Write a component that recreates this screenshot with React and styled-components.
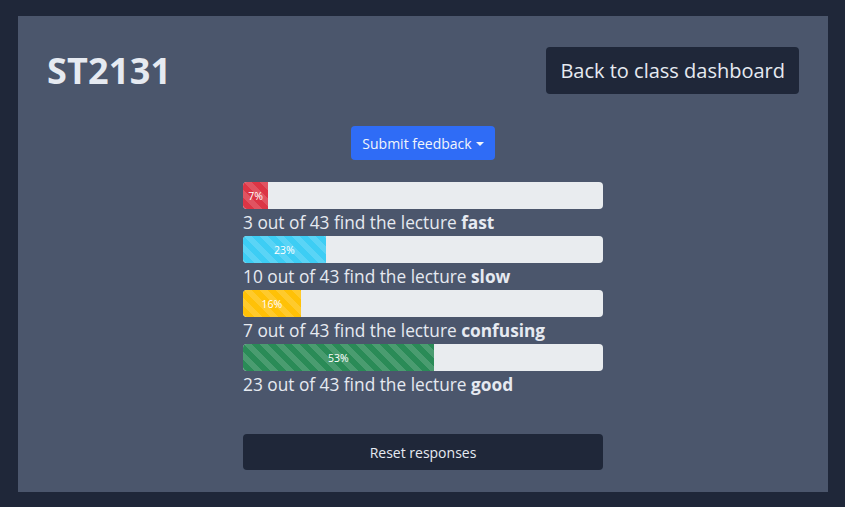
import styled, { createGlobalStyle } from 'styled-components';

const GlobalStyle = createGlobalStyle`
  html, body {
    margin: 0;
    padding: 0;
    background-color: #1f2739;
    font-family: "Open Sans", "Noto Sans", sans-serif;
  }
`;

const Page = styled.div`
  padding: 16px 17px 15px 18px;
  box-sizing: border-box;
  height: 507px;
`;

const Panel = styled.div`
  height: 476px;
  background-color: #4b566c;
  padding: 30px 29px 0 29px;
  box-sizing: border-box;
`;

const Header = styled.div`
  display: flex;
  justify-content: space-between;
  align-items: center;
`;

const Title = styled.h1`
  margin: 0;
  font-size: 36px;
  font-weight: 700;
  color: #e6eaf1;
  letter-spacing: 0.2px;
`;

const DarkButton = styled.button`
  background-color: #1f2739;
  color: #e6eaf1;
  border: none;
  border-radius: 4px;
  font-family: inherit;
  font-size: ${(p) => (p.large ? '20px' : '14px')};
  height: ${(p) => (p.large ? '47px' : '36px')};
  padding: ${(p) => (p.large ? '0 14px 0 14px' : '0')};
  width: ${(p) => (p.large ? 'auto' : '100%')};
  cursor: pointer;
`;

const Content = styled.div`
  width: 360px;
  margin: 31px auto 0;
  display: flex;
  flex-direction: column;
  align-items: center;
`;

const DropdownButton = styled.button`
  background-color: #2f6cf6;
  color: #f2f5fb;
  border: none;
  border-radius: 4px;
  font-family: inherit;
  font-size: 14px;
  height: 34px;
  padding: 0 11px;
  display: flex;
  align-items: center;
  gap: 4px;
  margin-bottom: 22px;
`;

const Caret = styled.span`
  width: 0;
  height: 0;
  border-left: 4px solid transparent;
  border-right: 4px solid transparent;
  border-top: 4px solid #f2f5fb;
  margin-top: 1px;
`;

const Stats = styled.div`
  width: 100%;
  display: flex;
  flex-direction: column;
`;

const Track = styled.div`
  height: 27px;
  background-color: #e9ecef;
  border-radius: 4px;
  overflow: hidden;
  display: flex;
`;

const Fill = styled.div`
  height: 100%;
  background-color: ${(p) => p.color};
  background-image: linear-gradient(
    45deg,
    rgba(255, 255, 255, 0.15) 25%,
    transparent 25%,
    transparent 50%,
    rgba(255, 255, 255, 0.15) 50%,
    rgba(255, 255, 255, 0.15) 75%,
    transparent 75%,
    transparent
  );
  background-size: 16px 16px;
  color: #fff;
  font-size: 10.5px;
  display: flex;
  align-items: center;
  justify-content: center;
  white-space: nowrap;
`;

const Label = styled.div`
  font-size: 17.3px;
  line-height: 27px;
  color: #e6eaf1;

  b {
    font-weight: 700;
  }
`;

const ResetWrap = styled.div`
  width: 100%;
  margin-top: 36px;
`;

const data = [
  { count: 3, word: 'fast', color: '#dc3545' },
  { count: 10, word: 'slow', color: '#3dcdf4' },
  { count: 7, word: 'confusing', color: '#ffc107' },
  { count: 23, word: 'good', color: '#2a8b57' },
];
const total = 43;

const App = () => {
  return (
    <Page>
      <GlobalStyle />
      <Panel>
        <Header>
          <Title>ST2131</Title>
          <DarkButton large>Back to class dashboard</DarkButton>
        </Header>
        <Content>
          <DropdownButton>
            Submit feedback
            <Caret />
          </DropdownButton>
          <Stats>
            {data.map((d) => {
              const pct = Math.round((d.count / total) * 100);
              return (
                <div key={d.word}>
                  <Track>
                    <Fill color={d.color} style={{ width: `${pct}%` }}>
                      {pct}%
                    </Fill>
                  </Track>
                  <Label>
                    {d.count} out of {total} find the lecture <b>{d.word}</b>
                  </Label>
                </div>
              );
            })}
          </Stats>
          <ResetWrap>
            <DarkButton>Reset responses</DarkButton>
          </ResetWrap>
        </Content>
      </Panel>
    </Page>
  );
};

export default App;
